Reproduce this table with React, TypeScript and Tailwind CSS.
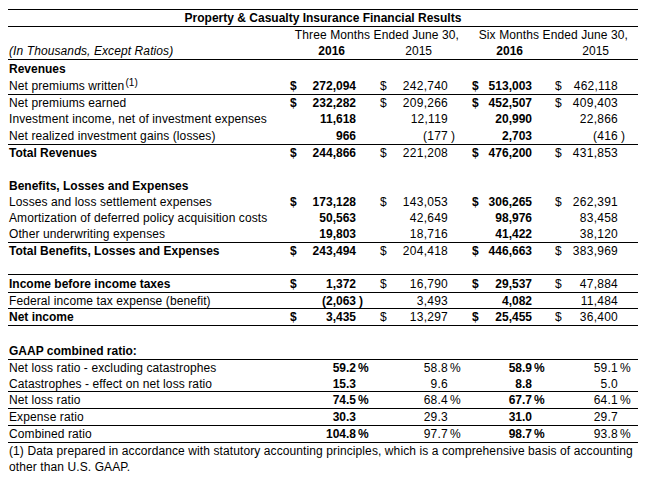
import React, { Fragment } from "react";

const dCls = [
  "w-[16px] pl-[6px]",
  "w-[24px] pl-[12px]",
  "w-[24px] pl-[12px]",
  "w-[23px] pl-[11px]",
];
const nCls = [
  "w-[68px] pr-[12px]",
  "w-[68px] pr-[12px] tracking-[0.25px]",
  "w-[60px] pr-[12px]",
  "w-[71px] pr-[20px] tracking-[0.25px]",
];

function Num({ v }: { v?: string }) {
  if (!v) return null;
  let main = v;
  let suf = "";
  if (v.endsWith(")")) {
    main = v.slice(0, -1);
    suf = ")";
  } else if (v.endsWith("%")) {
    main = v.replace(" %", "");
    suf = "%";
  }
  return (
    <span className="relative whitespace-nowrap">
      {main}
      {suf && (
        <span className={`absolute left-full top-0 tracking-normal ${suf === ")" ? "pl-[3px]" : "pl-[2px]"}`}>
          {suf}
        </span>
      )}
    </span>
  );
}

type RowProps = {
  label?: React.ReactNode;
  bold?: boolean;
  h?: string;
  border?: boolean;
  dollars?: boolean;
  vals?: string[];
};

function Row({ label, bold, h = "h-4", border, dollars, vals }: RowProps) {
  return (
    <div className={`flex items-center ${h} ${border ? "border-b border-black" : ""}`}>
      <div className={`w-[276px] pl-[1px] whitespace-nowrap ${bold ? "font-bold" : "tracking-[0.1px]"}`}>{label}</div>
      {[0, 1, 2, 3].map((i) => (
        <Fragment key={i}>
          <div className={`${dCls[i]} ${i % 2 === 0 ? "font-bold" : ""}`}>{dollars ? "$" : ""}</div>
          <div className={`${nCls[i]} flex justify-end ${i % 2 === 0 ? "font-bold" : ""}`}>
            <Num v={vals?.[i]} />
          </div>
        </Fragment>
      ))}
    </div>
  );
}

export default function App() {
  return (
    <div className="w-[654px] h-[486px] bg-white text-black px-[8px] pt-[9px] font-['Liberation_Sans',Arial,sans-serif] text-[12px] leading-[14px]">
      <div className="w-[630px] border-t border-black">
        <div className="flex h-[17px] items-center justify-center border-b border-black font-bold">
          Property &amp; Casualty Insurance Financial Results
        </div>
        <div className="flex h-4 items-center tracking-[0.1px]">
          <div className="w-[276px]" />
          <div className="w-[176px] flex justify-end pr-[1px] whitespace-nowrap">Three Months Ended June 30,</div>
          <div className="w-[178px] flex justify-end pr-[10px] whitespace-nowrap">Six Months Ended June 30,</div>
        </div>
        <div className="flex h-[17px] items-center border-b border-black">
          <div className="w-[276px] pl-[1px] italic whitespace-nowrap tracking-[0.1px]">(In Thousands, Except Ratios)</div>
          <div className="w-[16px]" />
          <div className="w-[68px] flex justify-end pr-[23px] font-bold">2016</div>
          <div className="w-[24px]" />
          <div className="w-[68px] flex justify-end pr-[28px]">2015</div>
          <div className="w-[24px]" />
          <div className="w-[60px] flex justify-end pr-[21px] font-bold">2016</div>
          <div className="w-[23px]" />
          <div className="w-[71px] flex justify-end pr-[29px]">2015</div>
        </div>

        <Row label="Revenues" bold h="h-[17px]" />
        <Row
          label={
            <>
              Net premiums written
              <sup className="text-[10px] top-[-4px] ml-[1px]">(1)</sup>
            </>
          }
          h="h-[18px]"
          border
          dollars
          vals={["272,094", "242,740", "513,003", "462,118"]}
        />
        <Row label="Net premiums earned" dollars vals={["232,282", "209,266", "452,507", "409,403"]} />
        <Row label="Investment income, net of investment expenses" vals={["11,618", "12,119", "20,990", "22,866"]} />
        <Row
          label="Net realized investment gains (losses)"
          h="h-[18px]"
          border
          vals={["966", "(177)", "2,703", "(416)"]}
        />
        <Row label="Total Revenues" bold dollars vals={["244,866", "221,208", "476,200", "431,853"]} />
        <Row />
        <Row label="Benefits, Losses and Expenses" bold h="h-[17px]" />
        <Row label="Losses and loss settlement expenses" dollars vals={["173,128", "143,053", "306,265", "262,391"]} />
        <Row label="Amortization of deferred policy acquisition costs" vals={["50,563", "42,649", "98,976", "83,458"]} />
        <Row label="Other underwriting expenses" h="h-[17px]" border vals={["19,803", "18,716", "41,422", "38,120"]} />
        <Row
          label="Total Benefits, Losses and Expenses"
          bold
          dollars
          vals={["243,494", "204,418", "446,663", "383,969"]}
        />
        <Row h="h-4" border />
        <Row
          label="Income before income taxes"
          bold
          h="h-[18px]"
          border
          dollars
          vals={["1,372", "16,790", "29,537", "47,884"]}
        />
        <Row
          label="Federal income tax expense (benefit)"
          h="h-4"
          border
          vals={["(2,063)", "3,493", "4,082", "11,484"]}
        />
        <Row label="Net income" bold h="h-[17px]" border dollars vals={["3,435", "13,297", "25,455", "36,400"]} />
        <Row />
        <Row label="GAAP combined ratio:" bold h="h-[18px]" border />
        <Row label="Net loss ratio - excluding catastrophes" vals={["59.2 %", "58.8 %", "58.9 %", "59.1 %"]} />
        <Row label="Catastrophes - effect on net loss ratio" h="h-4" border vals={["15.3", "9.6", "8.8", "5.0"]} />
        <Row label="Net loss ratio" h="h-[17px]" border vals={["74.5 %", "68.4 %", "67.7 %", "64.1 %"]} />
        <Row label="Expense ratio" h="h-[17px]" border vals={["30.3", "29.3", "31.0", "29.7"]} />
        <Row label="Combined ratio" h="h-[17px]" border vals={["104.8 %", "97.7 %", "98.7 %", "93.8 %"]} />
        <div className="pl-[1px] pr-[4px] leading-[16px] tracking-[0.1px]">
          (1) Data prepared in accordance with statutory accounting principles, which is a comprehensive basis of
          accounting other than U.S. GAAP.
        </div>
      </div>
    </div>
  );
}
